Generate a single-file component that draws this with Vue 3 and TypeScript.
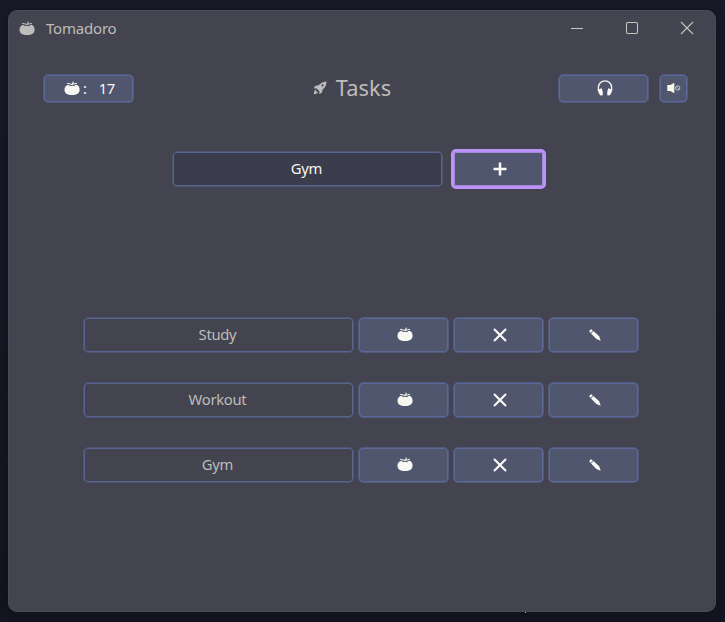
<script setup lang="ts">
import { ref } from 'vue'

interface Task {
  id: number
  name: string
}

const tomatoes = ref<number>(17)
const draft = ref<string>('Gym')
const tasks = ref<Task[]>([
  { id: 1, name: 'Study' },
  { id: 2, name: 'Workout' },
  { id: 3, name: 'Gym' },
])

function addTask(): void {
  const name = draft.value.trim()
  if (name) tasks.value.push({ id: Date.now(), name })
}

function removeTask(id: number): void {
  tasks.value = tasks.value.filter((t) => t.id !== id)
}
</script>

<template>
  <div class="desktop">
    <svg width="0" height="0" class="defs">
      <symbol id="tomato" viewBox="0 0 16 15">
        <path fill="currentColor" d="M.5 8.700C.5 6.300 1.700 4.500 3.600 3.900L6.200 4.400 4.800 5.200 8.200 4.800 11.200 5.200 10.300 4.300 12.600 3.800C14.500 4.500 15.600 6.300 15.600 8.700 15.600 12.200 12.700 14 8 14S.5 12.200.5 8.700z" />
        <path fill="none" stroke="currentColor" stroke-width="1.100" d="M3.200 2.300 8 3.500 12.800 2.300M8 3.800 9.400.6" />
      </symbol>
    </svg>
    <div class="window">
      <header class="titlebar">
        <svg class="logo" width="16" height="15"><use href="#tomato" /></svg>
        <span class="app-name">Tomadoro</span>
        <svg class="controls" width="126" height="16" viewBox="0 0 126 16" fill="none" stroke="#c4c4c2" stroke-width="1.1">
          <path d="M1 8.500h12" />
          <rect x="56.500" y="2.500" width="11" height="11" rx="1.200" />
          <path d="M111 2l12 12M123 2l-12 12" />
        </svg>
      </header>

      <section class="toolbar">
        <button class="btn count">
          <svg width="16" height="15"><use href="#tomato" /></svg>
          <span class="colon">:</span>
          <span class="num">{{ tomatoes }}</span>
        </button>
        <h1 class="title">
          <svg width="14" height="14" viewBox="0 0 15 15" fill="#bdbdbb">
            <path fill-rule="evenodd" d="M14.500 .5C10.500 .8 8 2.500 6 4.500L2.600 5 .6 8l3-.2 3.400 3.400L6.700 14.300l2.900-2.100.8-3.300C13 7 14.300 4.500 14.500 .5zM10.300 3.600a1.100 1.100 0 1 1 0 2.200 1.100 1.100 0 0 1 0-2.200z" />
            <path d="M3.300 9.200C1.500 10 1.300 11.500.8 14.200c2.600-.4 4.200-.8 4.900-2.700l-1.900 .6z" />
          </svg>
          <span>Tasks</span>
        </h1>
        <div class="audio">
          <button class="btn music" aria-label="Music">
            <svg width="16" height="16" viewBox="0 0 16 16">
              <path d="M1.400 11V7.500a6.600 6.600 0 0 1 13.200 0V11" fill="none" stroke="#f8f8f2" stroke-width="1.300" />
              <path d="M.9 9.600 4.800 8.300Q6.300 12 5.600 15.400L3 15.200Q.6 12.500 .9 9.600zM15.100 9.600 11.200 8.300Q9.700 12 10.400 15.400L13 15.200Q15.400 12.500 15.100 9.600z" fill="#f8f8f2" />
            </svg>
          </button>
          <button class="btn mute" aria-label="Mute">
            <svg width="14" height="12" viewBox="0 0 14 12">
              <path d="M.3 3h3L7.300.8v10.400L3.300 9h-3z" fill="#f8f8f2" />
              <circle cx="10.700" cy="6" r="2.200" fill="none" stroke="#c6c8cc" />
              <path d="M9.200 4.500l3 3" stroke="#c6c8cc" />
            </svg>
          </button>
        </div>
      </section>

      <form class="entry" @submit.prevent="addTask">
        <input v-model="draft" class="field" type="text" />
        <button class="btn add" aria-label="Add">
          <svg width="14" height="14" viewBox="0 0 14 14"><path d="M7 .5v13M.5 7h13" stroke="#f8f8f2" stroke-width="2.500" /></svg>
        </button>
      </form>

      <ul class="tasks">
        <li v-for="task in tasks" :key="task.id" class="task">
          <div class="name">{{ task.name }}</div>
          <button class="btn action" aria-label="Start">
            <svg width="16" height="15"><use href="#tomato" /></svg>
          </button>
          <button class="btn action" aria-label="Delete" @click="removeTask(task.id)">
            <svg width="14" height="14" viewBox="0 0 14 14"><path d="M1 1l12 12M13 1L1 13" stroke="#f8f8f2" stroke-width="2.200" /></svg>
          </button>
          <button class="btn action" aria-label="Edit">
            <svg width="12" height="12" viewBox="0 0 12 12" fill="#f8f8f2">
              <path d="M.3 2.300Q.5.600 2.400.3L3.800 1.500 1.500 3.900zM2 4.400 4.400 2 10.200 7.300 11.700 11.700 7.400 10z" />
            </svg>
          </button>
        </li>
      </ul>
    </div>
    <i class="star"></i>
  </div>
</template>

<style>
body {
  margin: 0;
  background: #141622;
}
</style>

<style scoped>
.desktop {
  position: relative;
  box-sizing: border-box;
  width: 725px;
  height: 622px;
  padding: 10px 9px 10px 8px;
  background: linear-gradient(#171927, #12141f);
  font-family: 'Noto Sans', 'Open Sans', sans-serif;
  font-size: 14.8px;
  letter-spacing: -0.300px;
  color: #bdbdbb;
  overflow: hidden;
}
.defs {
  position: absolute;
}
.window {
  box-sizing: border-box;
  height: 602px;
  border: 1px solid #4a4b56;
  border-radius: 9px;
  background: #43444f;
  box-shadow: 0 0 8px rgba(0, 0, 0, 0.25);
}
.titlebar {
  display: flex;
  align-items: center;
  height: 34px;
  padding: 0 19px 0 10px;
}
.app-name {
  margin-left: 11px;
  font-size: 15px;
  letter-spacing: -0.200px;
}
.controls {
  margin-left: auto;
}
.toolbar {
  display: flex;
  justify-content: space-between;
  align-items: flex-start;
  padding: 29px 27px 0 34px;
  height: 29px;
}
.btn {
  display: flex;
  align-items: center;
  justify-content: center;
  box-sizing: border-box;
  margin: 0;
  padding: 0 0 1px 2px;
  border: 1px solid #505a80;
  border-radius: 5px;
  background: #50566e;
  box-shadow: inset 0 0 0 1px #5c6998;
  color: #f8f8f2;
  font: inherit;
  letter-spacing: inherit;
  flex: none;
}
.btn svg,
.logo {
  display: block;
  flex: none;
}
.count {
  width: 91px;
  height: 29px;
}
.colon {
  margin-left: 3px;
}
.num {
  margin-left: 12px;
}
.title {
  display: flex;
  align-items: center;
  gap: 9px;
  height: 27px;
  margin: 0 0 0 12px;
  font-size: 21.800px;
  font-weight: 400;
  letter-spacing: 0.100px;
}
.audio {
  display: flex;
  gap: 10px;
}
.music {
  width: 91px;
  height: 29px;
}
.mute {
  width: 29px;
  height: 29px;
  padding-left: 0;
}
.entry {
  display: flex;
  align-items: center;
  gap: 8px;
  height: 40px;
  margin: 46px 0 0 163px;
}
.field,
.name {
  box-sizing: border-box;
  width: 271px;
  height: 36px;
  padding: 0 2px 2px 0;
  border: 1px solid #4c5470;
  border-radius: 5px;
  box-shadow: inset 0 0 0 1px #586590;
  font: inherit;
  letter-spacing: inherit;
  text-align: center;
  outline: none;
}
.field {
  background: #3b3d4c;
  color: #f8f8f2;
}
.name {
  line-height: 33px;
}
.add {
  width: 95px;
  height: 40px;
  border: 3px solid #bd93f9;
  border-radius: 5px;
  box-shadow: inset 0 0 0 1px #a387da;
}
.tasks {
  display: flex;
  flex-direction: column;
  gap: 29px;
  margin: 128px 0 0 74px;
  padding: 0;
  list-style: none;
}
.task {
  display: flex;
  gap: 4px;
}
.action {
  width: 91px;
  height: 36px;
}
.star {
  position: absolute;
  left: 525px;
  top: 612px;
  width: 1px;
  height: 1px;
  background: #b4b6bd;
}
</style>
